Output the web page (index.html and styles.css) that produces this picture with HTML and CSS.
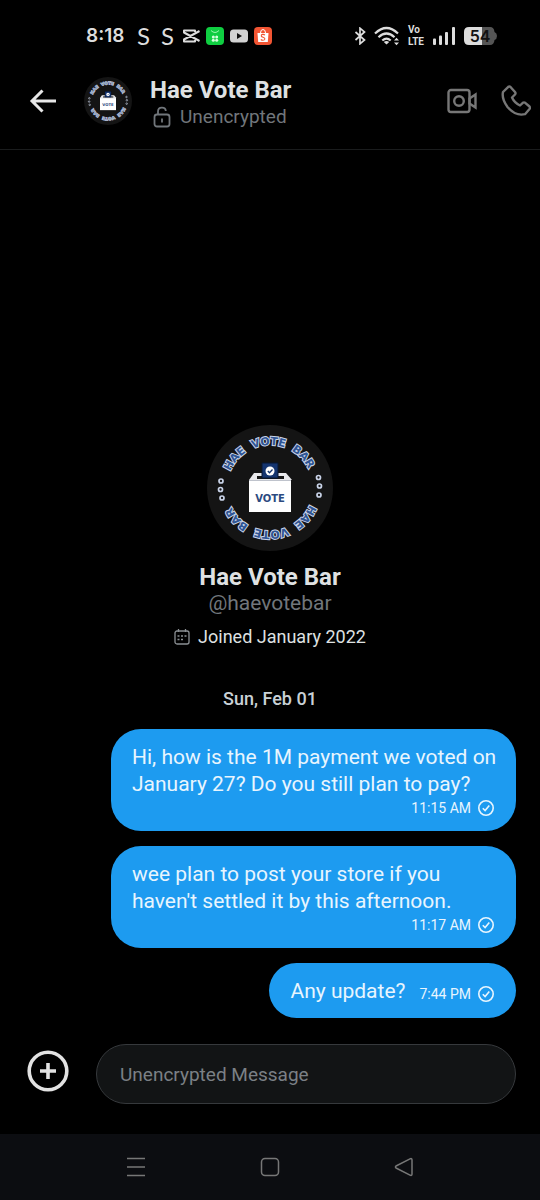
FILE: index.html
```
<!DOCTYPE html>
<html lang="en">
<head>
  <meta charset="UTF-8" />
  <meta name="viewport" content="width=device-width, initial-scale=1" />
  <title>Hae Vote Bar</title>
  <link rel="stylesheet" href="styles.css">
</head>
<body>
  <!-- shared icons -->
  <svg class="defs" width="0" height="0" aria-hidden="true">
    <symbol id="sent" viewBox="0 0 18 18">
      <g fill="none" stroke="#e8f5fe" stroke-width="1.600">
        <circle cx="9" cy="9" r="7.200" />
        <path d="M5.800 9.300l2.300 2.300 4.200-5" />
      </g>
    </symbol>
  </svg>

  <div class="status-bar">
    <div class="status-left">
      <span class="clock">8:18</span>
      <span class="app-s">S</span>
      <span class="app-s">S</span>
      <svg width="18" height="18" viewBox="0 0 18 18" fill="none" stroke="#ddd" stroke-width="2" stroke-linejoin="round">
        <path d="M13 5V3.500H2V5.500L17.500 14M13 13v1.500H2V12.500L17.500 4" />
      </svg>
      <svg width="18" height="18" viewBox="0 0 18 18">
        <rect width="18" height="18" rx="4" fill="#0fce41" />
        <path d="M5 3.500q4 4 8 0" fill="none" stroke="#9df5ae" />
        <g fill="#d6ffdd"><circle cx="7.300" cy="10" r="1.500" /><circle cx="10.700" cy="10" r="1.500" /><circle cx="7.300" cy="13.300" r="1.500" /><circle cx="10.700" cy="13.300" r="1.500" /></g>
      </svg>
      <svg width="18" height="18" viewBox="0 0 18 18">
        <rect y="2.500" width="18" height="13" rx="3.500" fill="#d2d2d2" />
        <path d="M7 6l5 3-5 3z" fill="#111" />
      </svg>
      <svg width="18" height="18" viewBox="0 0 18 18">
        <rect width="18" height="18" rx="4" fill="#f25533" />
        <path d="M3.500 6h11l-.7 9H4.200z" fill="#fff" />
        <path d="M6.500 6q0-3.500 2.500-3.500T11.500 6" fill="none" stroke="#fff" />
        <path d="M11 8q-1.200-.8-2.500-.6-1.500.4-1.200 1.600.2.800 1.700 1.200 2 .5 1.900 1.800-.3 1.300-1.900 1.300-1.200 0-2.200-.8" fill="none" stroke="#f25533" stroke-width="1.100" />
      </svg>
    </div>
    <div class="status-right">
      <svg width="12" height="18" viewBox="0 0 12 18" fill="none" stroke="#ddd" stroke-width="1.700">
        <path d="M1.500 5l9 8L6 16.800V1.200L10.500 5l-9 8" />
      </svg>
      <svg width="26" height="20" viewBox="0 0 26 20" fill="none" stroke="#ddd" stroke-width="2.200">
        <path d="M1 7.500Q12.500-3.500 24 7.500M4.500 11.200q8-7.400 16 0M8.300 14.500q4.200-3.800 8.400 0" />
        <path d="M12.500 18.500l-2.700-2.600q2.700-2 5.400 0z" fill="#ddd" stroke="none" />
        <path d="M20 14.500l2.500-2.700 2.500 2.700zM20 16.500l2.500 2.700 2.500-2.700z" fill="#ddd" stroke="none" />
      </svg>
      <span class="volte">Vo<br>LTE</span>
      <svg width="24" height="20" viewBox="0 0 24 20" fill="#ddd">
        <rect x="1" y="12.500" width="3" height="6.500" rx="1" /><rect x="7" y="9.500" width="3" height="9.500" rx="1" /><rect x="13" y="6" width="3" height="13" rx="1" /><rect x="20" y="1" width="3" height="18" rx="1" />
      </svg>
      <svg class="battery" width="33" height="18" viewBox="0 0 33 18">
        <path d="M18 0h8q4 0 4.500 5 2.500 1 2.500 4t-2.500 4q-.5 5-4.500 5h-8z" fill="#555" />
        <path d="M18 0H5Q0 0 0 5v8q0 5 5 5h13z" fill="#ddd" />
        <text x="16" y="15" text-anchor="middle">54</text>
      </svg>
    </div>
  </div>

  <header class="header">
    <button class="icon-btn" aria-label="Back">
      <svg width="28" height="24" viewBox="0 0 28 24" fill="none" stroke="#e7e7e7" stroke-width="3">
        <path d="M27 12H3M13.500 1.500L3 12l10.500 10.500" />
      </svg>
    </button>
    <svg class="avatar-small" viewBox="0 0 126 126" aria-hidden="true"><use href="#logo" /></svg>
    <div class="contact">
      <h1>Hae Vote Bar</h1>
      <div class="encryption">
        <svg width="18" height="22" viewBox="0 0 18 22" fill="none" stroke="#71767b" stroke-width="1.800">
          <rect x="1.500" y="8.500" width="15" height="12" rx="2.500" />
          <path d="M5 8.500V5.500C5 .500 12.500.500 12.800 5M9 12.500v4" />
        </svg>
        <span>Unencrypted</span>
      </div>
    </div>
    <div class="call-actions">
      <button class="icon-btn" aria-label="Video call">
        <svg width="30" height="26" viewBox="0 0 30 26" fill="none" stroke="#777" stroke-width="2.400">
          <rect x="1.500" y="2" width="21" height="22" rx="2.500" />
          <circle cx="12" cy="13" r="4.800" />
          <path d="M22.500 10.500L28.500 6.500v13l-6-4z" />
        </svg>
      </button>
      <button class="icon-btn" aria-label="Call">
        <svg width="30" height="32" viewBox="0 0 30 32" fill="none" stroke="#777" stroke-width="2.400" stroke-linejoin="round">
          <path d="M2 7L7.300 1.800Q8.500 1 9.700 2.200L14 7Q15 8.300 14 9.500L11 12.500Q13.500 18 19 20.500L21.800 17.800Q23 17 24.200 17.800L28.500 21.500Q29.500 22.700 28.500 24L24 29.200Q14.500 31.500 6.500 22 .500 14 2 7z" />
        </svg>
      </button>
    </div>
  </header>

  <main class="thread">
    <section class="profile">
      <svg class="avatar" viewBox="0 0 126 126">
        <g id="logo">
          <circle cx="63" cy="63" r="63" fill="#141414" />
          <path id="ring" d="M63 106 A43 43 0 0 1 63 20 A43 43 0 0 1 63 106" fill="none" />
          <g class="ring-letters">
            <g id="ring-text">
              <text><textPath href="#ring" startOffset="36%">HAE</textPath></text>
              <text><textPath href="#ring" startOffset="49.5%">VOTE</textPath></text>
              <text><textPath href="#ring" startOffset="63%">BAR</textPath></text>
            </g>
            <use href="#ring-text" transform="rotate(180 63 63)" />
          </g>
          <g fill="#141414" stroke="#c9d3e8" stroke-width="1.700">
            <circle cx="14" cy="56" r="2" /><circle cx="13.500" cy="64.500" r="2" /><circle cx="15" cy="73" r="2" />
            <circle cx="111.500" cy="52.500" r="2" /><circle cx="112.500" cy="61" r="2" /><circle cx="112" cy="70" r="2" />
          </g>
          <path d="M47 48h32l6 7H42z" fill="#e9e9ec" />
          <path d="M50 51h27v3H50z" fill="#171717" />
          <path d="M55 38h16v15H55z" fill="#14346f" stroke="#071633" />
          <circle cx="63" cy="46" r="4.500" fill="#fff" />
          <path d="M60.800 46l1.700 1.700 3-3.200" fill="none" stroke="#14346f" stroke-width="1.300" />
          <path d="M42 55h42v32H42z" fill="#fff" />
          <path d="M42 55.500h42" stroke="#bfc3cc" />
          <text class="box-label" x="63" y="77" text-anchor="middle">VOTE</text>
        </g>
      </svg>
      <h2>Hae Vote Bar</h2>
      <a class="handle" href="#">@haevotebar</a>
      <div class="joined">
        <svg width="16" height="16" viewBox="0 0 16 16" fill="none" stroke="#8b9094" stroke-width="1.300">
          <rect x="1" y="2" width="14" height="13" rx="2" />
          <path d="M4.500 0v3M11.500 0v3M3.500 7h2M7 7h2M10.500 7h2M3.500 10.500h2M7 10.500h2" />
        </svg>
        <span>Joined January 2022</span>
      </div>
    </section>

    <div class="date">Sun, Feb 01</div>

    <div class="messages">
      <div class="bubble">
        <p>Hi, how is the 1M payment we voted on January 27? Do you still plan to pay?</p>
        <div class="meta"><span>11:15 AM</span><svg class="sent"><use href="#sent" /></svg></div>
      </div>
      <div class="bubble">
        <p>wee plan to post your store if you haven't settled it by this afternoon.</p>
        <div class="meta"><span>11:17 AM</span><svg class="sent"><use href="#sent" /></svg></div>
      </div>
      <div class="bubble bubble-short">
        <p>Any update?</p>
        <div class="meta"><span>7:44 PM</span><svg class="sent"><use href="#sent" /></svg></div>
      </div>
    </div>
  </main>

  <form class="composer">
    <button class="icon-btn" type="button" aria-label="Add attachment">
      <svg width="42" height="42" viewBox="0 0 42 42" fill="none" stroke="#e2e2e2">
        <circle cx="21" cy="21" r="18.800" stroke-width="3.600" />
        <path d="M21 13v16M13 21h16" stroke-width="3.600" />
      </svg>
    </button>
    <input type="text" placeholder="Unencrypted Message" aria-label="Message" />
  </form>

  <nav class="nav-bar">
    <button class="icon-btn" aria-label="Recent apps">
      <svg width="20" height="20" viewBox="0 0 20 20" fill="none" stroke="#777" stroke-width="1.500"><path d="M1 1.500h18M1 10h18M1 18.500h18" /></svg>
    </button>
    <button class="icon-btn" aria-label="Home">
      <svg width="20" height="20" viewBox="0 0 20 20" fill="none" stroke="#777" stroke-width="1.500"><rect x="1.500" y="1.500" width="17" height="17" rx="3.500" /></svg>
    </button>
    <button class="icon-btn" aria-label="Go back">
      <svg width="20" height="20" viewBox="0 0 20 20" fill="none" stroke="#777" stroke-width="1.500" stroke-linejoin="round"><path d="M2 9L16.500 1.700Q18 1.300 18 3v14q0 1.700-1.500 1.300L2 11Q1 10 2 9z" /></svg>
    </button>
  </nav>
</body>
</html>
```
FILE: styles.css
```
* {
  box-sizing: border-box;
}

body {
  margin: 0;
  min-height: 100vh;
  display: flex;
  flex-direction: column;
  background: #000;
  color: #dfe1e2;
  font-family: Roboto, "Liberation Sans", sans-serif;
}

h1, h2, p {
  margin: 0;
}

svg {
  display: block;
  flex-shrink: 0;
}

.defs {
  position: absolute;
}

.icon-btn {
  padding: 0;
  border: none;
  background: none;
  cursor: pointer;
}

/* status bar */
.status-bar {
  display: flex;
  justify-content: space-between;
  align-items: center;
  height: 72px;
  padding: 0 43px 0 86px;
}

.status-left {
  display: flex;
  align-items: center;
  gap: 6px;
  color: #ddd;
}

.clock {
  margin-right: 4px;
  font: 600 19px/24px Inter, sans-serif;
}

.app-s {
  width: 18px;
  text-align: center;
  font: 24px/24px Lato, sans-serif;
}

.status-right {
  display: flex;
  align-items: center;
  gap: 8px;
}

.volte {
  color: #ddd;
  font-size: 10px;
  font-weight: 700;
  line-height: 12px;
}

.battery text {
  font: 600 16px Inter, sans-serif;
  fill: #111;
}

/* header */
.header {
  display: flex;
  align-items: center;
  height: 78px;
  padding: 0 9px 20px 29px;
  border-bottom: 1px solid #1a1c1d;
}

.avatar-small {
  --letter-fill: #8493b3;
  width: 48px;
  height: 48px;
  margin: 0 18px 0 27px;
}

.contact {
  flex: 1;
  padding-top: 4px;
}

.contact h1 {
  font-size: 24px;
  line-height: 28px;
}

.encryption {
  display: flex;
  align-items: center;
  gap: 9px;
  padding-left: 3px;
  color: #71767b;
  font-size: 19px;
  line-height: 26px;
}

.call-actions {
  display: flex;
  align-items: center;
  gap: 24px;
}

/* logo */
.ring-letters {
  font: 700 11px "DejaVu Sans", sans-serif;
  text-anchor: middle;
  fill: var(--letter-fill, #2f5595);
  stroke: #c9d3e8;
  stroke-width: 2px;
  paint-order: stroke;
}

.box-label {
  font: 700 10px "DejaVu Sans", sans-serif;
  fill: #2c4a80;
}

/* thread */
.thread {
  flex: 1;
  display: flex;
  flex-direction: column;
  justify-content: flex-end;
  padding: 0 24px 26px;
}

.profile {
  display: flex;
  flex-direction: column;
  align-items: center;
}

.avatar {
  width: 126px;
  height: 126px;
  margin-bottom: 12px;
}

.profile h2 {
  font-size: 24px;
  line-height: 28px;
}

.handle {
  color: #71767b;
  font-size: 21px;
  line-height: 24px;
  text-decoration: none;
}

.joined {
  display: flex;
  align-items: center;
  gap: 8px;
  margin-top: 10px;
  font-size: 18px;
  line-height: 24px;
}

.date {
  margin: 38px 0 18px;
  text-align: center;
  color: #c9d1d6;
  font-size: 18px;
  font-weight: 500;
  line-height: 24px;
}

.messages {
  display: flex;
  flex-direction: column;
  align-items: flex-end;
  gap: 15px;
}

.bubble {
  max-width: 405px;
  padding: 15px 16px 13px 21px;
  border-radius: 30px;
  background: #1d9bf0;
  color: #e8f5fe;
  font-size: 21px;
  line-height: 27px;
}

.meta {
  display: flex;
  justify-content: flex-end;
  align-items: center;
  gap: 6px;
  padding-right: 5px;
  font-size: 14px;
  line-height: 20px;
}

.sent {
  width: 18px;
  height: 18px;
}

.bubble-short {
  display: flex;
  align-items: center;
  gap: 14px;
}

.bubble-short .meta {
  padding-top: 4px;
}

/* composer */
.composer {
  display: flex;
  align-items: center;
  gap: 27px;
  padding: 0 24px 30px 27px;
}

.composer .icon-btn {
  margin-bottom: 6px;
}

.composer input {
  flex: 1;
  min-width: 0;
  height: 60px;
  padding: 0 23px;
  border: 1px solid #36393c;
  border-radius: 30px;
  background: #121415;
  color: #e7e9ea;
  font: 19px Roboto, "Liberation Sans", sans-serif;
}

.composer input::placeholder {
  color: #7b8085;
  opacity: 1;
}

/* system navigation */
.nav-bar {
  display: flex;
  justify-content: center;
  gap: 114px;
  height: 66px;
  background: #0c0d11;
}
```
